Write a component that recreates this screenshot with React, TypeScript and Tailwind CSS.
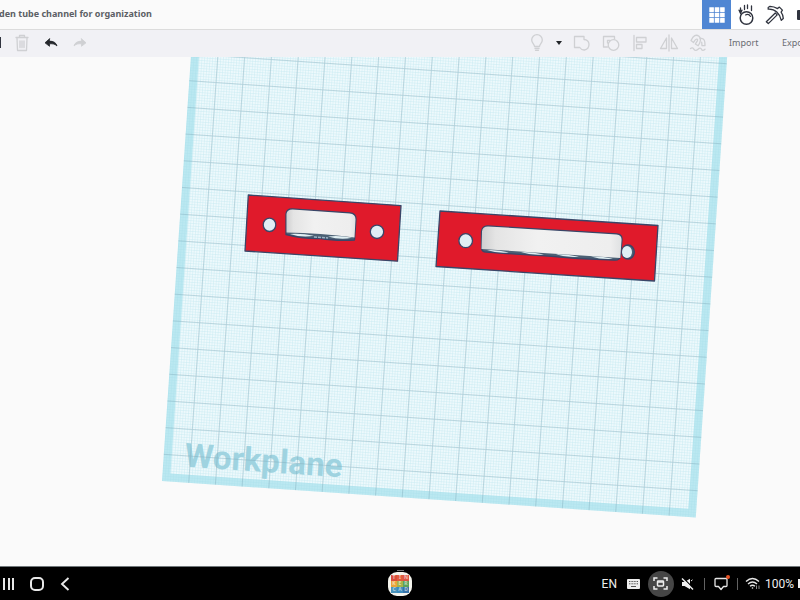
import type { ReactNode } from "react";

const lines = Array.from({ length: 19 }, (_, i) => (i + 1) * 26.75);

function Tool({ label, children, disabled = false }: { label: string; children: ReactNode; disabled?: boolean }) {
  return (
    <button aria-label={label} disabled={disabled} className="flex h-6 w-[29px] shrink-0 items-center justify-center">
      <svg
        width="20"
        height="20"
        viewBox="0 0 20 20"
        fill="none"
        stroke={disabled ? "#cfd0d3" : "#25282c"}
        strokeWidth="1.3"
        strokeLinejoin="round"
        strokeLinecap="round"
      >
        {children}
      </svg>
    </button>
  );
}

function Header() {
  return (
    <header className="flex h-[29px] shrink-0 items-center overflow-hidden bg-[#fafafa]">
      <h1 className="-ml-px flex-1 truncate pb-px text-[9px] leading-4 font-bold text-[#5c5f65]">
        den tube channel for organization
      </h1>
      <nav className="flex shrink-0 bg-white">
        <button aria-label="3D design" className="flex h-[29px] w-[29px] items-center justify-center bg-[#4f86d3]">
          <svg width="16" height="16" viewBox="0 0 16 16" fill="#fff">
            {[0, 5.4, 10.8].map((y) =>
              [0, 5.4, 10.8].map((x) => <rect key={`${x}-${y}`} x={x + 0.3} y={y + 0.3} width="4.6" height="4.6" rx=".3" />),
            )}
          </svg>
        </button>
        <button aria-label="Sim lab" className="flex h-[29px] w-[29px] items-center justify-center">
          <svg width="20" height="22" viewBox="0 0 20 22" fill="none" stroke="#30343f" strokeWidth="1.5" strokeLinecap="round">
            <circle cx="10.500" cy="14" r="6.300" />
            <path d="M9.500 11q2.500-1.700 4.500.8M13 10.500l1.500 2" strokeWidth="1.100" />
            <path d="M4.500 4v5M8.500 1.500v4M11.500 1v3.500M15.500 2v4.500" strokeWidth="1.300" />
            <path d="m3.300 6.500 1.200 2.500 1.200-2.500Z" fill="#30343f" />
          </svg>
        </button>
        <button aria-label="Blocks" className="flex h-[29px] w-[29px] items-center justify-center">
          <svg width="20" height="20" viewBox="0 0 20 20" fill="none" stroke="#30343f" strokeWidth="1.3" strokeLinejoin="round">
            <path d="M3.200 2.500 5 1.300c3 .1 5.500 1 7.600 2.300l1.800-1.500 3 3-1.300 2c1.500 2 2.200 4 2.200 6.400l-2 1.800c-.8-4-2.300-6.300-4.500-8.300S7 4 3.200 4.200Z" />
            <path d="m10.300 8 1.900 1.900L3.300 18.600l-2-1.800Z" />
          </svg>
        </button>
        <button aria-label="Bricks" className="flex h-[29px] w-[11px] items-center justify-end">
          <span className="h-[10px] w-[3px] rounded-l-[1px] bg-[#30343f]" />
        </button>
      </nav>
    </header>
  );
}

function Toolbar() {
  return (
    <div role="toolbar" className="flex h-7 shrink-0 items-center overflow-hidden border-t border-[#dcdcdc] bg-[#f1f1f5] pb-[2px]">
      <button aria-label="Duplicate" className="flex h-6 w-[7px] items-center">
        <span className="h-[11px] w-px bg-[#30343f]" />
      </button>
      <Tool label="Delete" disabled>
        <path d="M4 4.500h12M7.500 4.300V2.500h5v1.800M5 5l.5 12.500h9L15 5M8 8v6.500M10 8v6.500M12 8v6.500" />
      </Tool>
      <Tool label="Undo">
        <path d="M8.500 5.800 4 9.800l4.500 3.500v-2.500c3.500-.2 5.500.2 7.500 2.200-.7-3.200-3.500-4.900-7.500-4.900Z" fill="#25282c" strokeWidth=".8" />
      </Tool>
      <Tool label="Redo" disabled>
        <path d="m11.500 5.800 4.500 4-4.500 3.500v-2.500c-3.500-.2-5.500.2-7.500 2.200.7-3.200 3.500-4.900 7.500-4.900Z" fill="#cfd0d3" strokeWidth=".8" />
      </Tool>
      <span className="flex-1" />
      <Tool label="Show all" disabled>
        <path d="M7.500 13.500C7.500 11 4.700 10 4.700 7a5.300 5.300 0 0 1 10.600 0c0 3-2.800 4-2.800 6.500ZM8 15.500h4M8.500 17.300h3" />
      </Tool>
      <button aria-label="Visibility options" className="flex h-6 w-4 items-center justify-center pr-px">
        <svg width="6" height="4" viewBox="0 0 6 4">
          <path d="M0 0h6L3 4Z" fill="#222529" />
        </svg>
      </button>
      <Tool label="Group" disabled>
        <path d="M2.500 3.500h9.500v3q4.500.3 5 4.500.2 5-4.500 6-3 .2-4.700-2.500H2.500Z" />
      </Tool>
      <Tool label="Ungroup" disabled>
        <path d="M6.500 14H2.500V3.500h11V6" />
        <circle cx="12.500" cy="12" r="5.300" />
        <path d="M6.500 10V7.300H9" />
      </Tool>
      <Tool label="Align" disabled>
        <path d="M4 2.500v15M6.500 4.500h9.500V9H6.500ZM6.500 11.500H12v4H6.500Z" />
      </Tool>
      <Tool label="Mirror" disabled>
        <path d="M10 2v16M7.500 5v10.500H1.500ZM12.500 5v10.500h6Z" />
      </Tool>
      <Tool label="Cruise" disabled>
        <path d="M3 7.500 5.500 9.500C7 7 7.500 5.500 9 6.200s0 2.300-1.700 4.800l2.900 1.700c2.500-4 3.500-7.200.8-9.500C8 1 5.500 2.500 3 7.500Z" />
        <path d="M12 5.500c2.500-.8 4.500 1 4.800 3.500l.2 3.500-3 .2-.3-3.500" />
        <path d="M2.500 15.500q2-1.500 3.500.8t4 0 3.500 0 3.500 0" />
      </Tool>
      <button className="ml-[17px] h-6 w-[53px] shrink-0 text-left text-[9px] leading-3 text-[#6a6d73]">Import</button>
      <button aria-label="Export" className="h-6 w-[18px] shrink-0 overflow-hidden text-left text-[9px] leading-3 text-[#6a6d73]">
        Expo
      </button>
    </div>
  );
}

function Workplane() {
  return (
    <svg
      role="img"
      aria-label="Workplane with two red brackets"
      className="h-full w-full"
      viewBox="0 57 800 509"
      preserveAspectRatio="xMidYMid slice"
    >
      <defs>
        <pattern id="fine" width="2.675" height="2.675" patternUnits="userSpaceOnUse">
          <path d="M0 0H2.675M0 0V2.675" stroke="#9fdbe7" strokeWidth=".9" />
        </pattern>
        <linearGradient id="wall">
          <stop offset="0" stopColor="#cfcfd0" />
          <stop offset=".1" stopColor="#e4e4e4" />
          <stop offset=".4" stopColor="#f1f1f1" />
          <stop offset=".92" stopColor="#eeeeee" />
          <stop offset="1" stopColor="#dfe1e2" />
        </linearGradient>
      </defs>
      <g transform="translate(162 481) rotate(3.9)">
        <rect y="-535" width="535" height="535" fill="#bbe8f1" />
        <rect x="8" y="-527" width="519" height="519" fill="#eef9fc" />
        <rect y="-535" width="535" height="535" fill="url(#fine)" opacity=".5" />
        <text x="21" y="-16" fill="#9fd3e0" fontSize="33" fontWeight="700" fontFamily="Roboto, sans-serif">
          Workplane
        </text>
        <g stroke="#7fa9b8" strokeWidth=".8" opacity=".48">
          {lines.map((p) => (
            <path key={p} d={`M${p} 0V-535M0 ${-p}H535`} />
          ))}
        </g>
      </g>

      <g stroke="#3a4668" strokeWidth="1.300" strokeLinejoin="round">
        <path d="m248.300 195 152.700 10.600-3.500 55.600-152.500-10.200Z" fill="#e01a2b" />
        <ellipse cx="269.500" cy="224.800" rx="6.300" ry="6.700" fill="#e1eef5" />
        <ellipse cx="377" cy="231.800" rx="6.700" ry="6.700" fill="#e1eef5" />
        <path d="M286 214q.5-5 6-5l58 4q6 .5 6 6l-1.500 21q-20 1-34-1.500-18 .5-34.500-4Z" fill="#4b6074" />
        <path d="M286.500 214q.5-4.500 6-4.500l57 4q6 .5 6 6l-1 18q-34-4.500-68-5Z" fill="url(#wall)" stroke="none" />
        <path d="M290 234q12 4 24 1.800-12-2.500-24-1.800Zm38 2.500q12 3.700 24 1.300-12-2.500-24-1.300Z" fill="#e0eff3" stroke="none" />
        <path d="m314 237 14 1" stroke="#9bb3c4" strokeWidth="1.500" strokeDasharray="3 1" />

        <path d="m440 211 218 14.500-3.500 55.500-218.500-14.500Z" fill="#e01a2b" />
        <ellipse cx="465.700" cy="240.700" rx="6.800" ry="7" fill="#e1eef5" />
        <ellipse cx="628" cy="252" rx="6.300" ry="7" fill="#4b6074" />
        <ellipse cx="627" cy="252" rx="5" ry="6" fill="#e1eef5" stroke="none" />
        <path d="M481.500 232q.5-6 6-6l129.500 8q5.500.5 5 6l-1.500 16q-.5 4.500-6 4.200l-36-1.500-30-2.500-32-2-30-2q-5-.2-5-4.200Z" fill="#4b6074" />
        <path d="M482 231.500q.5-5 6-5l128.500 8q5.500.5 5 6l-1.200 17.500-138.800-9Z" fill="url(#wall)" stroke="none" />
        <path
          d="M487 250q11-.5 22 2.500-11 1.300-22-2.500Zm34 2q12-.3 23 2.500-12 1.300-23-2.500Zm35 2.200q12-.3 23 2.500-12 1.300-23-2.500Zm35 2.300q11-.3 22 2.300-11 1.200-22-2.300Z"
          fill="#e0eff3"
          stroke="none"
        />
      </g>
    </svg>
  );
}

const tiles = [
  ["T", "#d84b3a"],
  ["I", "#e05a3c"],
  ["N", "#dc5544"],
  ["K", "#e9a53a"],
  ["E", "#a6b34a"],
  ["R", "#5da35c"],
  ["C", "#4b94bb"],
  ["A", "#3c8bbd"],
  ["D", "#3773a8"],
];

function SystemBar() {
  return (
    <footer className="grid h-[34px] shrink-0 grid-cols-[1fr_auto_1fr] items-center overflow-hidden border-t border-[#70777a] bg-black text-[#eeeeee]">
      <div className="flex items-center">
        <button aria-label="Recent apps" className="ml-[3px] flex h-3 w-[11px] justify-between">
          <span className="w-[2px] bg-[#e8e8e8]" />
          <span className="w-[2px] bg-[#e8e8e8]" />
          <span className="w-[2px] bg-[#e8e8e8]" />
        </button>
        <button aria-label="Home" className="ml-4 h-[14px] w-[14px] rounded-[5px] border-2 border-[#e8e8e8]" />
        <button aria-label="Back" className="ml-4">
          <svg width="10" height="14" viewBox="0 0 10 14" fill="none" stroke="#e8e8e8" strokeWidth="1.900">
            <path d="M8.500 1 2 7l6.500 6" />
          </svg>
        </button>
      </div>
      <button aria-label="Tinkercad" className="flex flex-col items-center gap-px pb-[2px]">
        <span className="h-px w-[7px] bg-[#777777]" />
        <span className="grid h-6 w-6 grid-cols-3 rounded-[9px] bg-[#f4f4ed] p-[3px]">
          {tiles.map(([letter, color]) => (
            <span
              key={letter}
              style={{ backgroundColor: color }}
              className="flex items-center justify-center overflow-hidden text-[5px] leading-none font-bold text-white/60"
            >
              {letter}
            </span>
          ))}
        </span>
      </button>
      <div className="flex items-center justify-end font-['Roboto',sans-serif] text-xs leading-4">
        <button className="mr-[10px]">EN</button>
        <button aria-label="Keyboard" className="mr-2">
          <svg width="13" height="10" viewBox="0 0 13 10">
            <rect width="13" height="10" rx="1" fill="#eee" />
            <path d="M2 2.500h9M2 4.800h9" stroke="#555" strokeDasharray="1 .6" />
            <path d="M4 7.500h5" stroke="#555" />
          </svg>
        </button>
        <button aria-label="Screen capture" className="mr-[7px] flex h-[26px] w-[26px] items-center justify-center rounded-full bg-[#464646]">
          <svg width="15" height="13" viewBox="0 0 15 13" fill="none" stroke="#eee" strokeWidth="1.500">
            <path d="M1 4V1h3.500M10.500 1H14v3M14 9v3h-3.500M4.500 12H1V9" />
            <rect x="4.500" y="4" width="6" height="5" rx=".7" />
            <path d="M4.500 5h6" />
          </svg>
        </button>
        <button aria-label="Muted" className="mr-[10px]">
          <svg width="13" height="12" viewBox="0 0 13 12">
            <path d="M1 4h2.500L9 .8v10.400L3.500 8H1Z" fill="#eee" />
            <path d="m2.200 0 10 10" stroke="#000" strokeWidth="1.200" />
            <path d="m1 .5 11 11" stroke="#eee" strokeWidth="1.400" />
            <path d="m10 3 1.500-1.200" stroke="#eee" />
          </svg>
        </button>
        <span className="mr-[9px] h-3 w-px bg-[#626262]" />
        <button aria-label="Notifications" className="relative mr-[9px]">
          <svg width="14" height="14" viewBox="0 0 14 14" fill="none" stroke="#e6e6e6" strokeWidth="1.300" strokeLinejoin="round">
            <path d="M2 1.500h10q1 0 1 1v6q0 1-1 1H9.500L7 12.500 4.500 9.500H2q-1 0-1-1v-6q0-1 1-1Z" />
          </svg>
          <span className="absolute -top-[2px] -right-[2px] h-1 w-1 rounded-full bg-[#e95426]" />
        </button>
        <span className="mr-[7px] h-3 w-px bg-[#626262]" />
        <button aria-label="Wi-Fi" className="mr-1">
          <svg width="16" height="13" viewBox="0 0 16 13" fill="none" stroke="#e6e6e6" strokeWidth="1.400">
            <path d="M1 4.500q6.500-6 13 0M3 7q4.500-4 9 0M5 9.300q2.500-2 5 0" />
            <circle cx="7.500" cy="11" r=".8" fill="#e6e6e6" stroke="none" />
            <path d="M11.500 12V8.500M14 8.500V12" stroke="#888" strokeWidth="1" />
          </svg>
        </button>
        <span className="mr-1">100%</span>
        <span className="h-[9px] w-[2px] bg-[#eeeeee]" />
      </div>
    </footer>
  );
}

export default function App() {
  return (
    <div className="flex h-screen flex-col overflow-hidden bg-[#fafafa] font-['Noto_Sans',sans-serif]">
      <Header />
      <Toolbar />
      <main className="min-h-0 flex-1">
        <Workplane />
      </main>
      <SystemBar />
    </div>
  );
}
